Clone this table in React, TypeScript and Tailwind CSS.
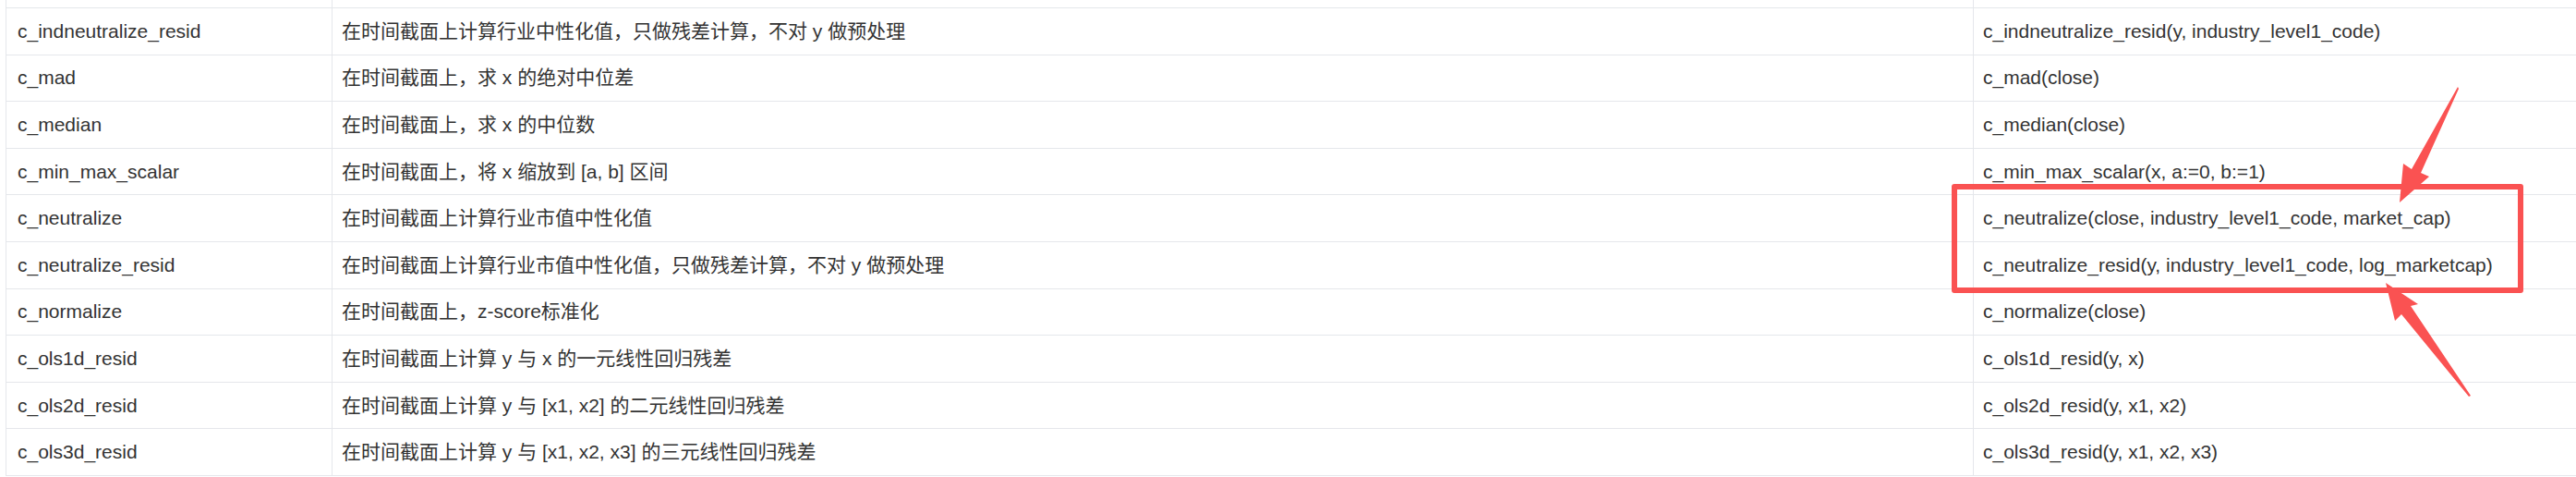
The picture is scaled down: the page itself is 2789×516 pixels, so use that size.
import React from 'react';

const rows = [
  ['c_indneutralize_resid', '在时间截面上计算行业中性化值，只做残差计算，不对 y 做预处理', 'c_indneutralize_resid(y, industry_level1_code)'],
  ['c_mad', '在时间截面上，求 x 的绝对中位差', 'c_mad(close)'],
  ['c_median', '在时间截面上，求 x 的中位数', 'c_median(close)'],
  ['c_min_max_scalar', '在时间截面上，将 x 缩放到 [a, b] 区间', 'c_min_max_scalar(x, a:=0, b:=1)'],
  ['c_neutralize', '在时间截面上计算行业市值中性化值', 'c_neutralize(close, industry_level1_code, market_cap)'],
  ['c_neutralize_resid', '在时间截面上计算行业市值中性化值，只做残差计算，不对 y 做预处理', 'c_neutralize_resid(y, industry_level1_code, log_marketcap)'],
  ['c_normalize', '在时间截面上，z-score标准化', 'c_normalize(close)'],
  ['c_ols1d_resid', '在时间截面上计算 y 与 x 的一元线性回归残差', 'c_ols1d_resid(y, x)'],
  ['c_ols2d_resid', '在时间截面上计算 y 与 [x1, x2] 的二元线性回归残差', 'c_ols2d_resid(y, x1, x2)'],
  ['c_ols3d_resid', '在时间截面上计算 y 与 [x1, x2, x3] 的三元线性回归残差', 'c_ols3d_resid(y, x1, x2, x3)'],
];

function FuncTable() {
  return (
    <div className="relative h-[516px] w-[2789px] overflow-hidden bg-white font-['Liberation_Sans','Noto_Sans_CJK_SC',sans-serif] text-[21px] leading-[24px] text-[#333]">
      <div className="ml-[6px] border-l border-[#e5e7eb]">
        {/* cut-off row above */}
        <div className="flex h-[9px] border-b border-[#e5e7eb]">
          <div className="w-[353px] border-r border-[#e5e7eb]" />
          <div className="w-[1777px] border-r border-[#e5e7eb]" />
          <div className="flex-1" />
        </div>
        {rows.map((row, index) => (
          <div key={index} className="flex h-[50.6px] items-center border-b border-[#e5e7eb]">
            <div className="flex h-full w-[353px] items-center border-r border-[#e5e7eb] pl-3 whitespace-nowrap">{row[0]}</div>
            <div className="flex h-full w-[1777px] items-center border-r border-[#e5e7eb] pl-[10px] whitespace-nowrap">{row[1]}</div>
            <div className="flex h-full flex-1 items-center pl-[10px] whitespace-nowrap">{row[2]}</div>
          </div>
        ))}
      </div>

      {/* annotation */}
      <div className="absolute left-[2113px] top-[199px] h-[118px] w-[619px] rounded-[3px] border-[6px] border-[#fa5252]" />
      <svg className="absolute left-0 top-0" width="2789" height="516" viewBox="0 0 2789 516">
        <polygon
          fill="#fa5252"
          points="2661,94 2662,96 2621,187 2630,191 2598,219 2602,177 2611,183"
        />
        <polygon
          fill="#fa5252"
          points="2583,306 2618,329 2610,331 2675,428 2673,429 2600,340 2593,347"
        />
      </svg>
    </div>
  );
}

export default function App() {
  return <FuncTable />;
}
